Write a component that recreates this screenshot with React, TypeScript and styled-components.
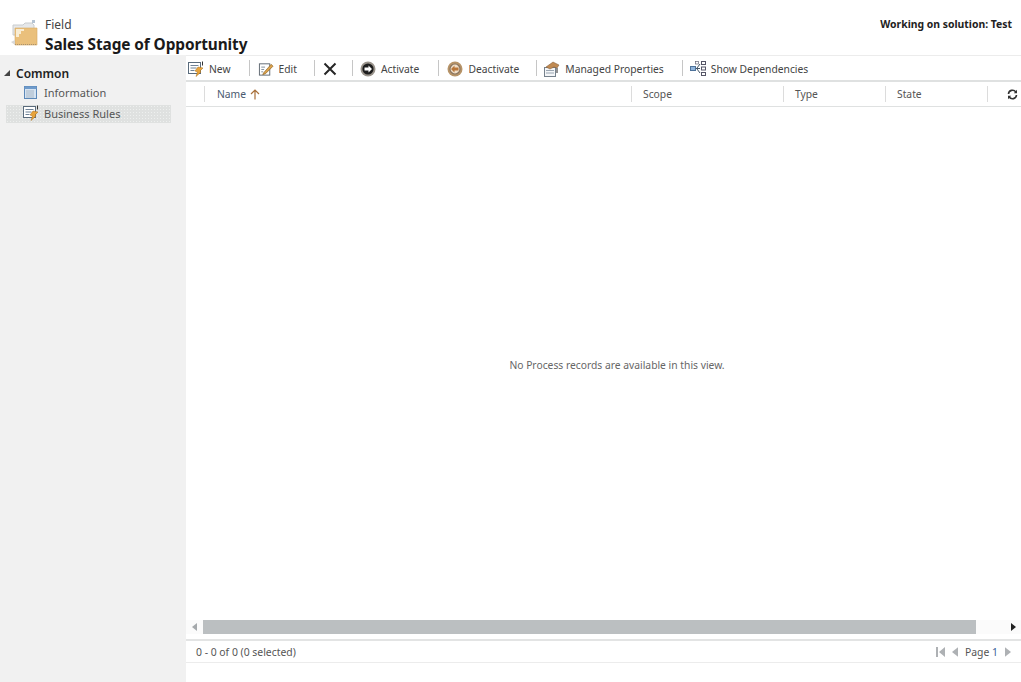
import React from "react";
import styled, { createGlobalStyle } from "styled-components";

const Global = createGlobalStyle`
  html, body { margin: 0; padding: 0; background: #fff; }
  body { font-family: "Noto Sans", "Open Sans", "Liberation Sans", sans-serif; }
  * { box-sizing: border-box; }
`;

const Page = styled.div`
  width: 1021px;
  height: 682px;
  display: grid;
  grid-template-rows: 55px 1fr;
  overflow: hidden;
  color: #444;
`;

const Header = styled.header`
  display: flex;
  align-items: flex-start;
  justify-content: space-between;
  padding: 16px 9px 0 11px;
`;

const TitleGroup = styled.div`
  display: flex;
  gap: 6px;
`;

const IconSlot = styled.div`
  padding-top: 4px;
  display: flex;
`;

const TitleText = styled.div`
  display: flex;
  flex-direction: column;
  padding-top: 1px;
`;

const Entity = styled.div`
  font-size: 12px;
  line-height: 16px;
  color: #444;
`;

const Title = styled.h1`
  margin: 2px 0 0;
  font-size: 15.4px;
  line-height: 20px;
  font-weight: 700;
  color: #1a1a1a;
  letter-spacing: -0.1px;
`;

const Solution = styled.div`
  font-size: 10.4px;
  line-height: 14px;
  margin-top: 1px;
  font-weight: 700;
  color: #222;
`;

const Body = styled.div`
  display: grid;
  grid-template-columns: 186px 1fr;
  min-height: 0;
`;

const Sidebar = styled.nav`
  background: #f1f1f1;
  padding: 10px 15px 0 6px;
`;

const GroupTitle = styled.div`
  display: flex;
  align-items: center;
  gap: 6px;
  height: 16px;
  margin: 0 0 2px -2px;
  font-size: 12px;
  font-weight: 600;
  color: #222;
`;

const NavItem = styled.div<{ $active?: boolean }>`
  display: flex;
  align-items: center;
  gap: 5px;
  height: 18px;
  margin-top: 3px;
  padding: 0 0 2px 17px;
  font-size: 11px;
  color: #555;
  background-color: ${(p) => (p.$active ? "#dfe1e0" : "transparent")};
  background-image: ${(p) =>
    p.$active ? "radial-gradient(#eef0ef 0.6px, transparent 0.7px)" : "none"};
  background-size: 3px 3px;
`;

const Main = styled.main`
  display: flex;
  flex-direction: column;
  min-width: 0;
  border-top: 1px solid #ececec;
`;

const Toolbar = styled.div`
  display: flex;
  align-items: center;
  height: 26px;
  padding-left: 2px;
  border-bottom: 2px solid #dfe1e1;
  flex: none;
`;

const ToolButton = styled.div`
  display: flex;
  align-items: center;
  gap: 5px;
  height: 24px;
  padding-top: 1px;
  font-size: 10.3px;
  color: #444;
  white-space: nowrap;
`;

const ToolDivider = styled.span<{ $l: number; $r: number }>`
  width: 1px;
  height: 16px;
  background: #c6c6c6;
  margin: 0 ${(p) => p.$r}px 0 ${(p) => p.$l}px;
`;

const GridHead = styled.div`
  display: grid;
  grid-template-columns: 19px 427px 152px 102px 102px 1fr;
  height: 25px;
  border-bottom: 1px solid #dfe1e1;
  flex: none;
`;

const HeadCell = styled.div<{ $first?: boolean }>`
  display: flex;
  align-items: center;
  gap: 4px;
  height: 16px;
  margin-top: 4px;
  padding-left: ${(p) => (p.$first ? "12px" : "11px")};
  font-size: 10.3px;
  color: ${(p) => (p.$first ? "#4a5a70" : "#555")};
  border-right: 1px solid #dcdcdc;
`;

const EndCell = styled.div`
  display: flex;
  align-items: center;
  justify-content: flex-end;
  height: 16px;
  margin-top: 4px;
  padding-right: 3px;
`;

const Empty = styled.div`
  flex: 1;
  min-height: 0;
  display: flex;
  align-items: center;
  justify-content: center;
  font-size: 10.3px;
  color: #666;
  padding: 2px 0 0 27px;
`;

const ScrollBar = styled.div`
  flex: none;
  height: 14px;
  display: grid;
  grid-template-columns: 17px 773px 1fr;
  align-items: center;
  background-color: #fbfbfb;
  background-image: radial-gradient(#d8d8d8 0.6px, transparent 0.7px);
  background-size: 4px 4px;
`;

const ScrollThumb = styled.div`
  height: 14px;
  background: #bbbfc1;
`;

const ScrollEnd = styled.div<{ $right?: boolean }>`
  display: flex;
  align-items: center;
  justify-content: ${(p) => (p.$right ? "flex-end" : "center")};
  padding-right: ${(p) => (p.$right ? "5px" : "0")};
`;

const Footer = styled.footer`
  flex: none;
  height: 24px;
  margin-top: 5px;
  margin-bottom: 19px;
  display: flex;
  align-items: center;
  justify-content: space-between;
  padding: 1px 10px 0 10px;
  border-top: 2px solid #e3e4e4;
  border-bottom: 1px solid #ececec;
  font-size: 10.4px;
  color: #555;
`;

const Pager = styled.div`
  display: flex;
  align-items: center;
  gap: 7px;
`;

const PageNum = styled.span`
  color: #3b5f9a;
`;

const FolderIcon = () => (
  <svg width="28" height="28" viewBox="0 0 28 28">
    <path d="M2 5h10l2-2h7l2 2v10H2z" fill="#e6e8ea" stroke="#c9ccce" />
    <rect x="21" y="0" width="3" height="3" fill="#b4c3d3" />
    <path d="M4 8h22v17H4z" fill="#eac07c" stroke="#d7aa62" strokeWidth=".6" />
    <path d="M5 9h8v2h-3v3H8v3H5z" fill="#f9edd3" />
    <path d="M4 24.5h22" stroke="#a89270" strokeDasharray="1 1" />
    <path d="M0 22l4 3v-5z" fill="#d8d8d8" />
  </svg>
);

const RuleIcon = () => (
  <svg width="16" height="16" viewBox="0 0 16 16">
    <rect x="0.5" y="1.5" width="12" height="11" fill="#fff" stroke="#5a6b7c" />
    <path d="M2.5 4.5h8M2.5 7h6M2.5 9.5h4" stroke="#6f8296" />
    <path d="M14.5 0.5v4" stroke="#333" />
    <path d="M7 10l3-4 5 1-3 3 1 1-5 4.5 1.5-4.5z" fill="#e8a33a" stroke="#a86c17" strokeWidth=".5" />
  </svg>
);

const EditIcon = () => (
  <svg width="16" height="16" viewBox="0 0 17 16">
    <rect x="1.5" y="2.5" width="11" height="12" fill="#fff" stroke="#5d6670" />
    <path d="M3.5 6h4M3.5 8.5h3M3.5 11h2" stroke="#7d8a97" />
    <path d="M6 12l8-9 2 2-8 8-3 1z" fill="#dca24b" stroke="#7c5316" strokeWidth=".6" />
  </svg>
);

const CloseIcon = () => (
  <svg width="14" height="14" viewBox="0 0 14 14">
    <path d="M1.5 1.5l11 11M12.5 1.5l-11 11" stroke="#262626" strokeWidth="2" />
  </svg>
);

const RoundIcon = ({ left, ring }: { left?: boolean; ring: string }) => (
  <svg width="16" height="16" viewBox="0 0 16 16">
    <circle cx="8" cy="8" r="7.5" fill={ring} />
    <circle cx="8" cy="8" r="5.6" fill={left ? "#8a7560" : "#1e1e1e"} />
    <circle cx="8" cy="8" r="4.4" fill={left ? "#f0dfc8" : "#1e1e1e"} />
    <path d={left ? "M4 8l3.5-3.5v2h4v3h-4v2z" : "M12 8L8.5 4.5v2h-4v3h4v2z"} fill={left ? "#b9773a" : "#fff"} />
  </svg>
);

const PropsIcon = () => (
  <svg width="16" height="16" viewBox="0 0 16 16">
    <rect x="0.5" y="6.5" width="11" height="9" fill="#f4f6f8" stroke="#75818c" />
    <path d="M2 9.5h8M2 12h8" stroke="#9aa6b2" />
    <path d="M2 6l7-5 6 3-2 3-3-1-4 2z" fill="#c08a52" stroke="#7b5430" strokeWidth=".5" />
    <path d="M13 7v5" stroke="#222" />
  </svg>
);

const DepsIcon = () => (
  <svg width="16" height="16" viewBox="0 0 16 16">
    <rect x="0.5" y="5.5" width="5" height="4" fill="#8fb4dc" stroke="#4d7199" />
    <path d="M6 7.5h4M7 7L10 3M7 8l3 4" stroke="#445566" fill="none" />
    <rect x="5.5" y="0.5" width="3" height="2.5" fill="#fff" stroke="#667" strokeWidth=".7" />
    <rect x="11.5" y="0.5" width="4" height="3" fill="#fff" stroke="#556" />
    <rect x="11.5" y="6" width="4" height="3" fill="#fff" stroke="#556" />
    <rect x="11.5" y="11.5" width="4" height="3" fill="#fff" stroke="#556" />
  </svg>
);

const InfoIcon = () => (
  <svg width="16" height="15" viewBox="0 0 16 15">
    <rect x="1.5" y="1.5" width="12" height="12" fill="#d6e4f2" stroke="#5c88b8" />
    <rect x="1.5" y="1.5" width="12" height="2.5" fill="#6f9bcb" />
    <path d="M3.5 6h8M3.5 8h8M3.5 10h8M3.5 12h8" stroke="#7c8a98" strokeDasharray="1 1" />
  </svg>
);

const Caret = () => (
  <svg width="6" height="6" viewBox="0 0 6 6">
    <path d="M0 6h6V0z" fill="#444" />
  </svg>
);

const SortArrow = () => (
  <svg width="10" height="11" viewBox="0 0 10 11">
    <path d="M5 10.5V1M1 5l4-4 4 4" stroke="#a8703a" strokeWidth="1.2" fill="none" />
  </svg>
);

const RefreshIcon = () => (
  <svg width="11" height="11" viewBox="0 0 11 11">
    <path d="M1.5 5A4 4 0 0 1 8.8 3M9.5 6A4 4 0 0 1 2.2 8" stroke="#333" strokeWidth="1.6" fill="none" />
    <path d="M10 0.8v3.4H6.8zM1 10.2V6.8h3.2z" fill="#333" />
  </svg>
);

const Tri = ({ right, color, w = 5, h = 8 }: { right?: boolean; color: string; w?: number; h?: number }) => (
  <svg width={w} height={h} viewBox="0 0 5 8">
    <path d={right ? "M0 0l5 4-5 4z" : "M5 0L0 4l5 4z"} fill={color} />
  </svg>
);

const FirstPage = () => (
  <svg width="9" height="10" viewBox="0 0 9 10">
    <path d="M0 0h2v10H0zM9 0L3 5l6 5z" fill="#aeb1b4" />
  </svg>
);

export default function App() {
  return (
    <Page>
      <Global />
      <Header>
        <TitleGroup>
          <IconSlot><FolderIcon /></IconSlot>
          <TitleText>
            <Entity>Field</Entity>
            <Title>Sales Stage of Opportunity</Title>
          </TitleText>
        </TitleGroup>
        <Solution>Working on solution: Test</Solution>
      </Header>
      <Body>
        <Sidebar>
          <GroupTitle><Caret />Common</GroupTitle>
          <NavItem><InfoIcon />Information</NavItem>
          <NavItem $active><RuleIcon />Business Rules</NavItem>
        </Sidebar>
        <Main>
          <Toolbar>
            <ToolButton><RuleIcon />New</ToolButton>
            <ToolDivider $l={18} $r={8} />
            <ToolButton><EditIcon />Edit</ToolButton>
            <ToolDivider $l={17} $r={8} />
            <ToolButton><CloseIcon /></ToolButton>
            <ToolDivider $l={15} $r={7} />
            <ToolButton><RoundIcon ring="#9a948c" />Activate</ToolButton>
            <ToolDivider $l={19} $r={8} />
            <ToolButton><RoundIcon left ring="#b79468" />Deactivate</ToolButton>
            <ToolDivider $l={17} $r={7} />
            <ToolButton><PropsIcon />Managed Properties</ToolButton>
            <ToolDivider $l={18} $r={7} />
            <ToolButton><DepsIcon />Show Dependencies</ToolButton>
          </Toolbar>
          <GridHead>
            <HeadCell />
            <HeadCell $first>Name <SortArrow /></HeadCell>
            <HeadCell>Scope</HeadCell>
            <HeadCell>Type</HeadCell>
            <HeadCell>State</HeadCell>
            <EndCell><RefreshIcon /></EndCell>
          </GridHead>
          <Empty>No Process records are available in this view.</Empty>
          <ScrollBar>
            <ScrollEnd><Tri color="#a5a9ac" /></ScrollEnd>
            <ScrollThumb />
            <ScrollEnd $right><Tri right color="#222" /></ScrollEnd>
          </ScrollBar>
          <Footer>
            <span>0 - 0 of 0 (0 selected)</span>
            <Pager>
              <FirstPage />
              <Tri color="#aeb1b4" w={6} h={10} />
              <span>Page <PageNum>1</PageNum></span>
              <Tri right color="#aeb1b4" w={6} h={10} />
            </Pager>
          </Footer>
        </Main>
      </Body>
    </Page>
  );
}
